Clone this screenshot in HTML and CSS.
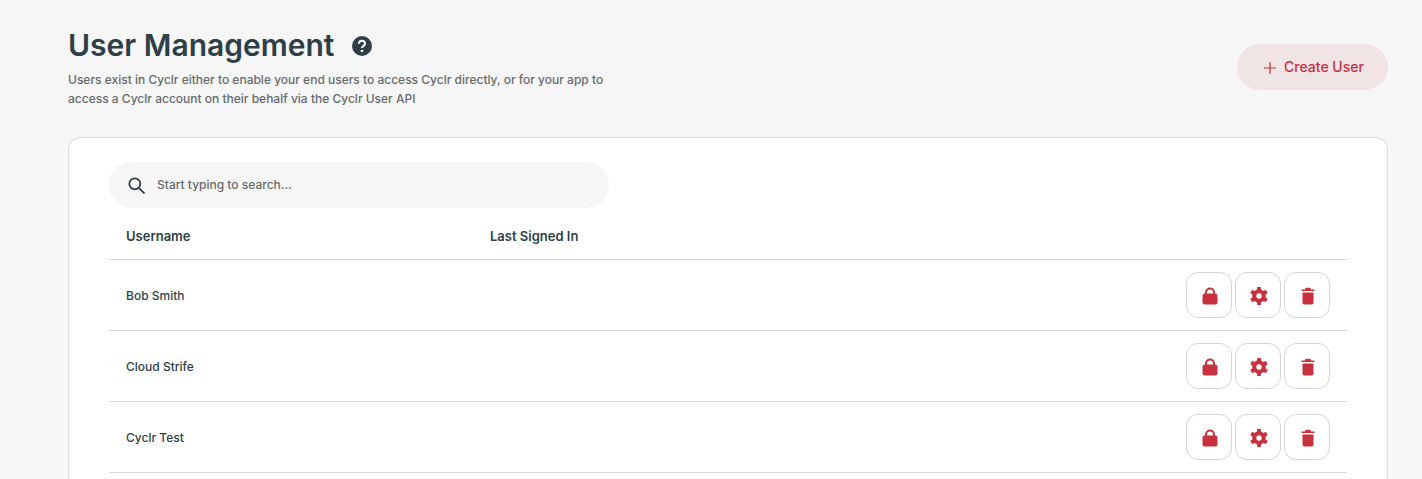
FILE: index.html
```html
<!DOCTYPE html>
<html lang="en">
<head>
<meta charset="utf-8">
<title>User Management</title>
<link rel="stylesheet" href="styles.css">
</head>
<body>
<main class="page">
  <header class="head">
    <div class="head-text">
      <div class="title-row">
        <h1>User Management</h1>
        <svg class="help" viewBox="0 0 20 20" width="20" height="20"><circle cx="10" cy="10" r="10" fill="#2e3f48"/><path d="M7 7.8a3 3 0 0 1 6 0c0 2-3 2.200-3 4.200" fill="none" stroke="#fff" stroke-width="2"/><circle cx="10" cy="15" r="1.300" fill="#fff"/></svg>
      </div>
      <p class="lead">Users exist in Cyclr either to enable your end users to access Cyclr directly, or for your app to access a Cyclr account on their behalf via the Cyclr User API</p>
    </div>
    <button class="create">
      <svg class="plus" viewBox="0 0 12 12" width="12" height="12"><path d="M6 0v12M0 6h12" stroke="#c8323f" stroke-width="1.200" fill="none"/></svg>
      <span>Create User</span>
    </button>
  </header>

  <section class="card">
    <div class="search">
      <svg viewBox="0 0 17 17" width="17" height="17"><circle cx="6.800" cy="6.800" r="5.500" fill="none" stroke="#2e3f48" stroke-width="1.800"/><path d="M10.800 10.800l5.700 5.700" stroke="#2e3f48" stroke-width="1.800" fill="none"/></svg>
      <span class="placeholder">Start typing to search...</span>
    </div>
    <div class="row row-head">
      <div class="col-name">Username</div>
      <div class="col-last">Last Signed In</div>
    </div>
    <div class="row">
      <div class="col-name">Bob Smith</div>
      <div class="col-last"></div>
      <div class="actions">
        <button class="act"><svg viewBox="0 0 16 18" width="16" height="18"><path d="M4 8V5.500a4 4 0 0 1 8 0V8" fill="none" stroke="#c8323f" stroke-width="2"/><rect x="0.500" y="6.500" width="15" height="11" rx="2.200" fill="#c8323f"/></svg></button>
        <button class="act"><svg viewBox="0 0 18 18" width="18" height="18"><circle cx="9" cy="9" r="5" fill="none" stroke="#c8323f" stroke-width="3.600"/><path d="M9 0V18M1.200 4.500L16.800 13.500M1.200 13.500L16.800 4.500" stroke="#c8323f" stroke-width="3.800" fill="none"/><circle cx="9" cy="9" r="2.700" fill="#fff"/></svg></button>
        <button class="act"><svg viewBox="0 0 14 18" width="14" height="18"><path d="M.5 2.500h13V4H.5zM4 2.500C4 1 5 .8 7 .8s3 .2 3 1.700z" fill="#c8323f"/><path d="M1.500 5.500h11v10.300a1.800 1.800 0 0 1-1.800 1.800H3.300a1.800 1.800 0 0 1-1.800-1.800z" fill="#c8323f"/></svg></button>
      </div>
    </div>
    <div class="row">
      <div class="col-name">Cloud Strife</div>
      <div class="col-last"></div>
      <div class="actions">
        <button class="act"><svg viewBox="0 0 16 18" width="16" height="18"><path d="M4 8V5.500a4 4 0 0 1 8 0V8" fill="none" stroke="#c8323f" stroke-width="2"/><rect x="0.500" y="6.500" width="15" height="11" rx="2.200" fill="#c8323f"/></svg></button>
        <button class="act"><svg viewBox="0 0 18 18" width="18" height="18"><circle cx="9" cy="9" r="5" fill="none" stroke="#c8323f" stroke-width="3.600"/><path d="M9 0V18M1.200 4.500L16.800 13.500M1.200 13.500L16.800 4.500" stroke="#c8323f" stroke-width="3.800" fill="none"/><circle cx="9" cy="9" r="2.700" fill="#fff"/></svg></button>
        <button class="act"><svg viewBox="0 0 14 18" width="14" height="18"><path d="M.5 2.500h13V4H.5zM4 2.500C4 1 5 .8 7 .8s3 .2 3 1.700z" fill="#c8323f"/><path d="M1.500 5.500h11v10.300a1.800 1.800 0 0 1-1.800 1.800H3.300a1.800 1.800 0 0 1-1.800-1.800z" fill="#c8323f"/></svg></button>
      </div>
    </div>
    <div class="row">
      <div class="col-name">Cyclr Test</div>
      <div class="col-last"></div>
      <div class="actions">
        <button class="act"><svg viewBox="0 0 16 18" width="16" height="18"><path d="M4 8V5.500a4 4 0 0 1 8 0V8" fill="none" stroke="#c8323f" stroke-width="2"/><rect x="0.500" y="6.500" width="15" height="11" rx="2.200" fill="#c8323f"/></svg></button>
        <button class="act"><svg viewBox="0 0 18 18" width="18" height="18"><circle cx="9" cy="9" r="5" fill="none" stroke="#c8323f" stroke-width="3.600"/><path d="M9 0V18M1.200 4.500L16.800 13.500M1.200 13.500L16.800 4.500" stroke="#c8323f" stroke-width="3.800" fill="none"/><circle cx="9" cy="9" r="2.700" fill="#fff"/></svg></button>
        <button class="act"><svg viewBox="0 0 14 18" width="14" height="18"><path d="M.5 2.500h13V4H.5zM4 2.500C4 1 5 .8 7 .8s3 .2 3 1.700z" fill="#c8323f"/><path d="M1.500 5.500h11v10.300a1.800 1.800 0 0 1-1.800 1.800H3.300a1.800 1.800 0 0 1-1.800-1.800z" fill="#c8323f"/></svg></button>
      </div>
    </div>
  </section>
</main>
</body>
</html>
```
FILE: styles.css
```css
* { box-sizing: border-box; }
html, body { margin: 0; height: 479px; overflow: hidden; background: #f6f6f6; }
body { font-family: Inter, "Liberation Sans", sans-serif; color: #2e3f48; }
.page { padding: 0 34px 0 68px; }
.head { display: flex; justify-content: space-between; align-items: flex-start; height: 137px; padding-top: 26px; }
.head-text { width: 560px; }
.title-row { display: flex; align-items: center; gap: 18px; height: 38px; }
h1 { margin: 0; font-size: 30px; line-height: 38px; font-weight: 600; color: #2e3f48; }
.help { margin-top: 2px; }
.lead { margin: 5px 0 0; font-size: 12px; line-height: 20px; font-weight: 500; color: #666a6d; }
.lead { margin-top: 6px; line-height: 19px; }
.create { display: flex; align-items: center; justify-content: center; gap: 8px; width: 151px; height: 46px; margin-top: 18px; padding: 0 0 2px 3px; border: 0; border-radius: 23px; background: #f1e4e5; color: #c8323f; font: 500 14px Inter, sans-serif; }
.plus { margin-top: 3px; }
.card { height: 400px; padding: 24px 40px; background: #fff; border: 1px solid #d8d8d8; border-radius: 12px; }
.search { display: flex; align-items: center; gap: 12px; width: 500px; height: 46px; padding-left: 19px; border-radius: 23px; background: #f6f6f6; }
.placeholder { padding-bottom: 2px; font-size: 12px; font-weight: 500; color: #666a6d; }
.row { display: flex; align-items: center; height: 71px; padding: 0 17px; border-bottom: 1px solid #d8d8d8; font-size: 12px; font-weight: 500; color: #2e3f48; }
.row-head { height: 52px; padding-top: 4px; font-size: 13px; font-weight: 600; }
.col-name { width: 364px; }
.actions { display: flex; gap: 3px; margin-left: auto; }
.act { display: flex; align-items: center; justify-content: center; width: 46px; height: 46px; padding: 1px 0 0 2px; background: #fff; border: 1px solid #d5d5d8; border-radius: 12px; }
```
